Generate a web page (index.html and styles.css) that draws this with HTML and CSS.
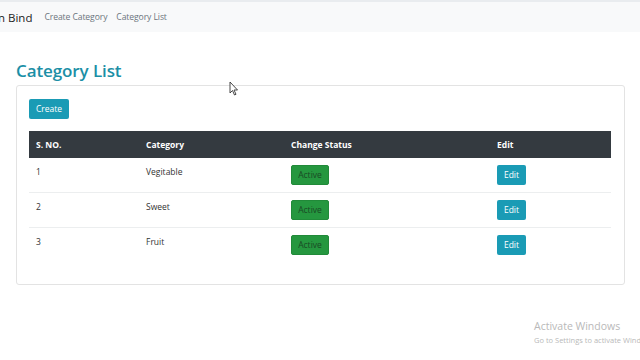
FILE: index.html
```html
<!DOCTYPE html>
<html>
<head>
<meta charset="utf-8">
<link rel="stylesheet" href="styles.css">
</head>
<body>
<nav class="navbar">
  <span class="brand">n Bind</span>
  <a class="nav-link">Create Category</a>
  <a class="nav-link">Category List</a>
</nav>
<main class="container">
  <h1 class="title">Category List</h1>
  <div class="card">
    <div class="toolbar"><button class="btn btn-info">Create</button></div>
    <table class="table">
      <thead>
        <tr><th class="c1">S. NO.</th><th class="c2">Category</th><th class="c3">Change Status</th><th class="c4">Edit</th></tr>
      </thead>
      <tbody>
        <tr><td>1</td><td>Vegitable</td><td><button class="btn btn-success">Active</button></td><td><button class="btn btn-info">Edit</button></td></tr>
        <tr><td>2</td><td>Sweet</td><td><button class="btn btn-success">Active</button></td><td><button class="btn btn-info">Edit</button></td></tr>
        <tr><td>3</td><td>Fruit</td><td><button class="btn btn-success">Active</button></td><td><button class="btn btn-info">Edit</button></td></tr>
      </tbody>
    </table>
  </div>
</main>
<svg class="cursor" width="10" height="15" viewBox="0 0 10 15"><path d="M1 1 L1 12 L3.5 9.5 L5.5 14 L7 13.3 L5 9 L8.5 9 Z" fill="#fff" stroke="#333" stroke-width="0.9"/></svg>
<div class="watermark">
  <div class="wm-title">Activate Windows</div>
  <div class="wm-sub">Go to Settings to activate Windows.</div>
</div>
</body>
</html>
```
FILE: styles.css
```css
* { box-sizing: border-box; }
html, body { margin: 0; padding: 0; }
body {
  width: 640px; height: 360px; overflow: hidden; position: relative;
  background: #fff;
  font-family: "Open Sans", "Noto Sans", sans-serif;
  color: #212529;
}
.navbar {
  height: 32px;
  background: #f8f9fa;
  border-top: 2px solid #e9ecef;
  display: flex; align-items: center;
  gap: 9px;
}
.brand { font-size: 11.5px; color: #222; margin-left: -2px; margin-right: 3px; }
.nav-link { font-size: 8.6px; color: #6c757d; letter-spacing: -0.1px; }
.container { padding: 0 15px 0 16px; }
.title {
  margin: 28px 0 3px 0;
  font-size: 17px; font-weight: 600; color: #1b8fa6;
  line-height: 22px; letter-spacing: -0.1px;
}
.card {
  border: 1px solid #e3e3e3;
  border-radius: 3px;
  padding: 13px 13px 22px 12px;
}
.toolbar { display: flex; margin-bottom: 12px; }
.btn {
  display: block;
  border: none; border-radius: 2px;
  font-family: inherit; font-size: 8.5px;
  height: 20px; padding: 0;
  line-height: 20px; text-align: center;
}
.btn-info { background: #1a9bb5; color: #fff; }
.btn-success { background: #25973f; color: #1a4a25; border: 1px solid #218a39; line-height: 18px; }
.toolbar .btn { width: 40px; }
td .btn-info { width: 29px; }
td .btn-success { width: 38px; }
.table { width: 582px; border-collapse: collapse; font-size: 8.5px; }
.table th {
  background: #343a40; color: #fff; font-weight: 700;
  text-align: left; height: 27px; padding: 0 7px; vertical-align: middle;
}
.table td {
  height: 35px; padding: 7px 7px 0 7px; vertical-align: top;
  border-top: 1px solid #eceeef; color: #333;
}
.table tbody tr:first-child td { border-top: none; height: 34px; }
.table td:nth-child(1), .table td:nth-child(2) { padding-top: 7px; line-height: 14px; }
.c1 { width: 110px; }
.c2 { width: 145px; }
.c3 { width: 206px; }
.cursor { position: absolute; left: 229px; top: 81px; }
.watermark { position: absolute; left: 534px; top: 319px; color: #b9b9b9; white-space: nowrap; }
.wm-title { font-size: 10.5px; line-height: 14px; }
.wm-sub { font-size: 7.5px; line-height: 12px; margin-top: 1px; }
```
